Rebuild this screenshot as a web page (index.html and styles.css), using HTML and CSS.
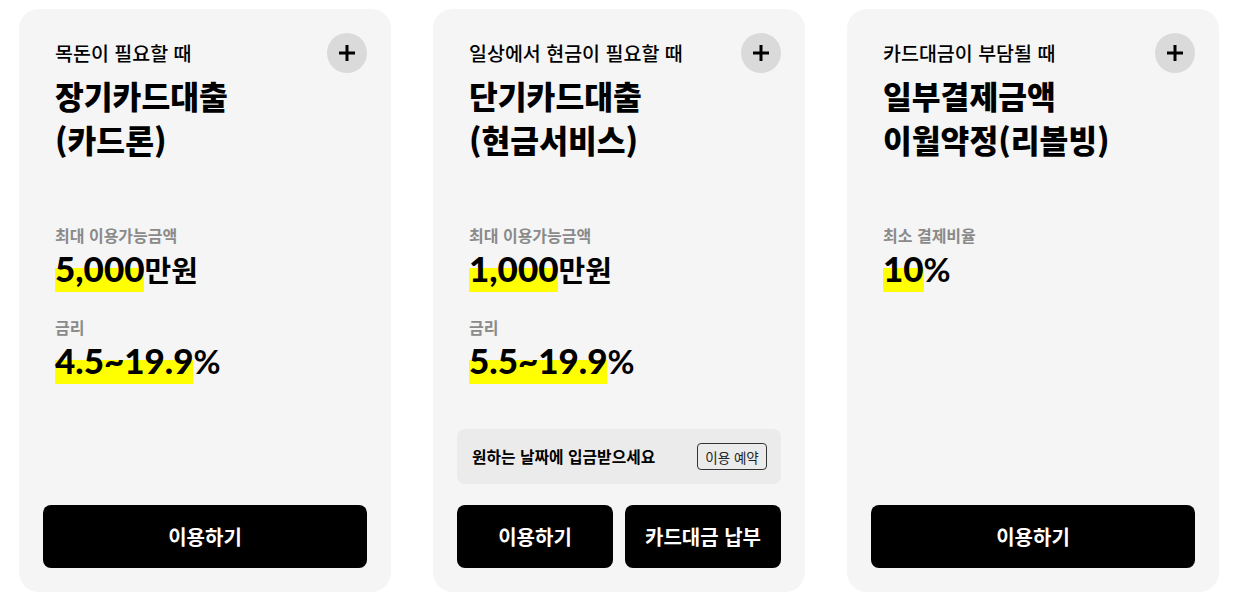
FILE: index.html
```html
<!DOCTYPE html>
<html lang="ko">
<head>
<meta charset="utf-8">
<link rel="stylesheet" href="styles.css">
</head>
<body>
<div class="cards">
  <div class="card">
    <div class="head">
      <div class="titles">
        <p class="sub">목돈이 필요할 때</p>
        <h2 class="title">장기카드대출<br>(카드론)</h2>
      </div>
      <button class="plus" aria-label="더보기"><svg width="18" height="18" viewBox="0 0 18 18"><path d="M9 1v16M1 9h16" stroke="#000" stroke-width="3" fill="none"/></svg></button>
    </div>
    <div class="info">
      <p class="label">최대 이용가능금액</p>
      <p class="value"><span class="hl">5,000</span>만원</p>
      <p class="label second">금리</p>
      <p class="value"><span class="hl">4.5~19.9</span><span class="pct">%</span></p>
    </div>
    <div class="actions">
      <button class="btn">이용하기</button>
    </div>
  </div>
  <div class="card">
    <div class="head">
      <div class="titles">
        <p class="sub">일상에서 현금이 필요할 때</p>
        <h2 class="title">단기카드대출<br>(현금서비스)</h2>
      </div>
      <button class="plus" aria-label="더보기"><svg width="18" height="18" viewBox="0 0 18 18"><path d="M9 1v16M1 9h16" stroke="#000" stroke-width="3" fill="none"/></svg></button>
    </div>
    <div class="info">
      <p class="label">최대 이용가능금액</p>
      <p class="value"><span class="hl">1,000</span>만원</p>
      <p class="label second">금리</p>
      <p class="value"><span class="hl">5.5~19.9</span><span class="pct">%</span></p>
    </div>
    <div class="notice">
      <span class="notice-text">원하는 날짜에 입금받으세요</span>
      <button class="mini">이용 예약</button>
    </div>
    <div class="actions split">
      <button class="btn">이용하기</button>
      <button class="btn">카드대금 납부</button>
    </div>
  </div>
  <div class="card">
    <div class="head">
      <div class="titles">
        <p class="sub">카드대금이 부담될 때</p>
        <h2 class="title">일부결제금액<br>이월약정(리볼빙)</h2>
      </div>
      <button class="plus" aria-label="더보기"><svg width="18" height="18" viewBox="0 0 18 18"><path d="M9 1v16M1 9h16" stroke="#000" stroke-width="3" fill="none"/></svg></button>
    </div>
    <div class="info">
      <p class="label">최소 결제비율</p>
      <p class="value"><span class="hl">10</span><span class="pct">%</span></p>
    </div>
    <div class="actions">
      <button class="btn">이용하기</button>
    </div>
  </div>
</div>
</body>
</html>
```
FILE: styles.css
```css
* { box-sizing: border-box; }
html, body { margin: 0; padding: 0; background: #fff; }
body {
  font-family: "Noto Sans CJK KR", "Noto Sans", sans-serif;
  color: #000;
}
p, h2 { margin: 0; }
button { font-family: inherit; cursor: pointer; }
.cards {
  display: flex;
  gap: 42px;
  padding: 9px 0 0 19px;
}
.card {
  width: 372px;
  height: 583px;
  background: #f5f5f5;
  border-radius: 20px;
  padding: 24px;
  display: flex;
  flex-direction: column;
}
.head {
  display: flex;
  justify-content: space-between;
  align-items: flex-start;
}
.titles { padding: 7px 12px 0; }
.sub {
  font-size: 19.5px;
  line-height: 26px;
  font-weight: 500;
}
.title {
  margin-top: 8px;
  font-size: 31.3px;
  line-height: 44px;
  font-weight: 900;
}
.plus {
  width: 40px;
  height: 40px;
  border-radius: 50%;
  border: 0;
  background: #dadada;
  padding: 0;
  display: flex;
  align-items: center;
  justify-content: center;
  flex: none;
}
.info { padding: 62px 12px 0; }
.label {
  font-size: 16px;
  line-height: 22px;
  font-weight: 700;
  color: #8a8a8a;
}
.label.second { margin-top: 27px; }
.value {
  margin-top: 2px;
  font-size: 29px;
  line-height: 40px;
  font-weight: 700;
}
.hl {
  font-family: Lato, "Noto Sans", sans-serif;
  font-weight: 900;
  font-size: 35px;
  padding-bottom: 3px;
  background: linear-gradient(to top, #ffff00 24px, transparent 24px);
}
.pct {
  font-family: Lato, sans-serif;
  font-weight: 700;
  font-size: 33px;
}
.notice {
  margin-top: auto;
  height: 55px;
  background: #ebebeb;
  border-radius: 8px;
  display: flex;
  align-items: center;
  justify-content: space-between;
  padding: 0 14px 0 15px;
}
.notice-text {
  font-size: 15.8px;
  font-weight: 700;
}
.mini {
  width: 70px;
  height: 27px;
  border: 1px solid #333;
  border-radius: 4px;
  background: transparent;
  font-size: 13.5px;
  color: #222;
  padding: 0;
}
.actions {
  margin-top: auto;
  display: flex;
  gap: 12px;
}
.notice + .actions { margin-top: 21px; }
.btn {
  flex: 1;
  height: 63px;
  border: 0;
  border-radius: 8px;
  background: #000;
  color: #fff;
  font-size: 20px;
  font-weight: 700;
}
```
